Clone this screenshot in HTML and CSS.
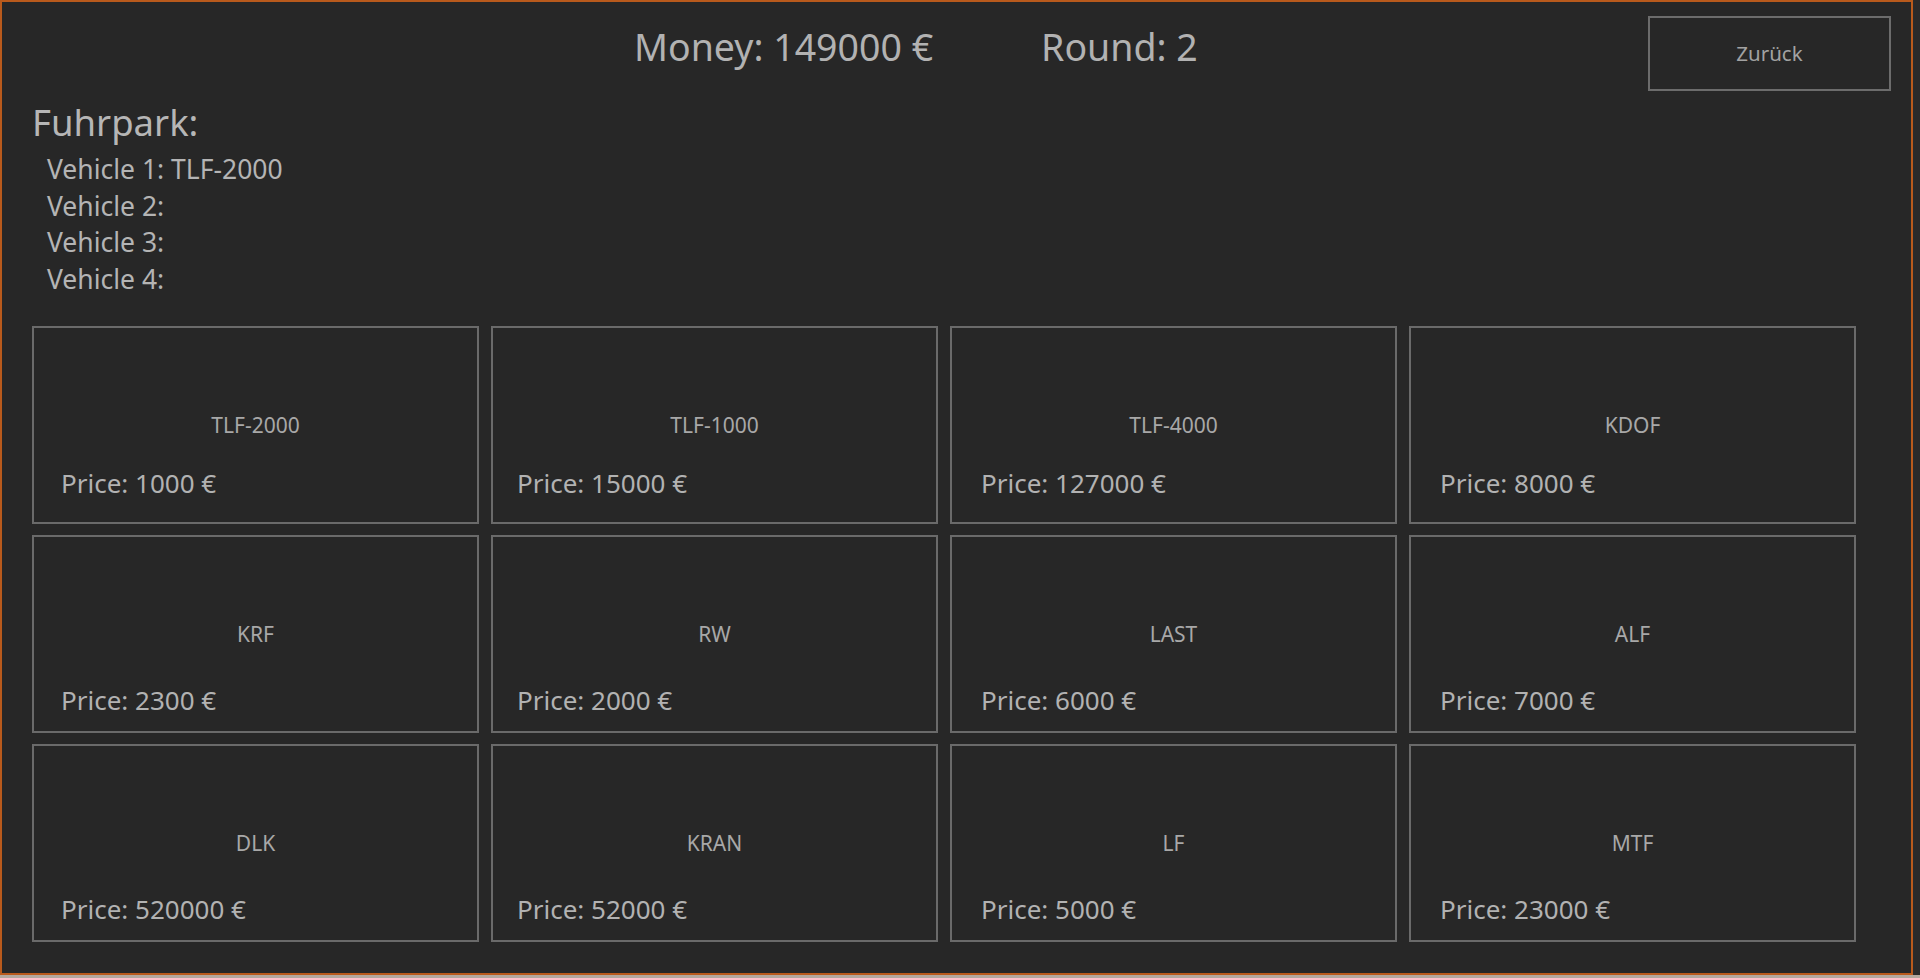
FILE: index.html
```html
<!DOCTYPE html>
<html lang="de">
<head>
    <meta charset="UTF-8">
    <title>Fuhrpark</title>
    <meta name="viewport" content="width=device-width, initial-scale=1.0">
    <link rel="stylesheet" href="styles.css">
</head>
<body>
    <div class="window">
        <div class="top-bar">
            <div class="stats">
                <span class="money">Money: 149000 €</span>
                <span class="round">Round: 2</span>
            </div>
            <button type="button" class="back-btn">Zurück</button>
        </div>

        <h2 class="fleet-title">Fuhrpark:</h2>
        <ul class="fleet-list">
            <li>Vehicle 1: TLF-2000</li>
            <li>Vehicle 2:</li>
            <li>Vehicle 3:</li>
            <li>Vehicle 4:</li>
        </ul>

        <div class="shop-grid">
            <div class="shop-card"><span class="card-name">TLF-2000</span><span class="card-price">Price: 1000 €</span></div>
            <div class="shop-card"><span class="card-name">TLF-1000</span><span class="card-price">Price: 15000 €</span></div>
            <div class="shop-card"><span class="card-name">TLF-4000</span><span class="card-price">Price: 127000 €</span></div>
            <div class="shop-card"><span class="card-name">KDOF</span><span class="card-price">Price: 8000 €</span></div>
            <div class="shop-card"><span class="card-name">KRF</span><span class="card-price">Price: 2300 €</span></div>
            <div class="shop-card"><span class="card-name">RW</span><span class="card-price">Price: 2000 €</span></div>
            <div class="shop-card"><span class="card-name">LAST</span><span class="card-price">Price: 6000 €</span></div>
            <div class="shop-card"><span class="card-name">ALF</span><span class="card-price">Price: 7000 €</span></div>
            <div class="shop-card"><span class="card-name">DLK</span><span class="card-price">Price: 520000 €</span></div>
            <div class="shop-card"><span class="card-name">KRAN</span><span class="card-price">Price: 52000 €</span></div>
            <div class="shop-card"><span class="card-name">LF</span><span class="card-price">Price: 5000 €</span></div>
            <div class="shop-card"><span class="card-name">MTF</span><span class="card-price">Price: 23000 €</span></div>
        </div>
    </div>
    <div class="taskbar-edge"></div>
</body>
</html>
```

FILE: styles.css
```css
body, html {
    margin: 0; padding: 0; background: #2a2a2a; color: #b4b4b4;
    font-family: 'Noto Sans', 'Open Sans', sans-serif;
}
.window {
    box-sizing: border-box; width: 1913px; height: 975px;
    border: 2px solid #b95a1c; background: #272727;
    padding: 14px 20px 0 30px;
}
.taskbar-edge { height: 3px; background: #b3a89e; }

.top-bar { display: flex; align-items: flex-start; height: 75px; }
.stats {
    display: flex; gap: 108px; margin: 11px 0 0 602px;
    font-size: 37.5px; line-height: 40px; color: #b2b2b2;
}
.back-btn {
    margin-left: auto; width: 243px; height: 75px; padding-bottom: 2px;
    background: #272727; border: 2px solid #6c6c6c; color: #a2a2a2;
    font-family: inherit; font-size: 20.5px; cursor: pointer;
}

.fleet-title {
    margin: 13px 0 0; font-weight: normal; font-size: 36.5px; line-height: 36px; color: #b6b6b6;
}
.fleet-list {
    list-style: none; margin: 11px 0 0; padding: 0 0 0 15px;
    font-size: 26.5px; line-height: 36.5px; color: #b4b4b4;
}

.shop-grid {
    display: grid; grid-template-columns: repeat(4, 447px); grid-auto-rows: 198px;
    column-gap: 12px; row-gap: 11px; margin-top: 29px;
}
.shop-card {
    box-sizing: border-box; border: 2px solid #6a6a6a; background: #272727;
    display: grid; grid-template-rows: 1fr auto 1fr;
}
.card-name {
    grid-row: 2; justify-self: center; font-size: 21px; line-height: 24px; color: #a8a8a8;
}
.card-price {
    grid-row: 3; align-self: end; margin: 0 0 16px 29px;
    font-size: 26px; line-height: 30px; color: #b2b2b2;
}
.shop-card:nth-child(4n+1) .card-price { margin-left: 27px; }
.shop-card:nth-child(4n+2) .card-price { margin-left: 24px; }
/* first row sits a little higher in its cards */
.shop-card:nth-child(-n+4) .card-price { margin-bottom: 24px; }
```
